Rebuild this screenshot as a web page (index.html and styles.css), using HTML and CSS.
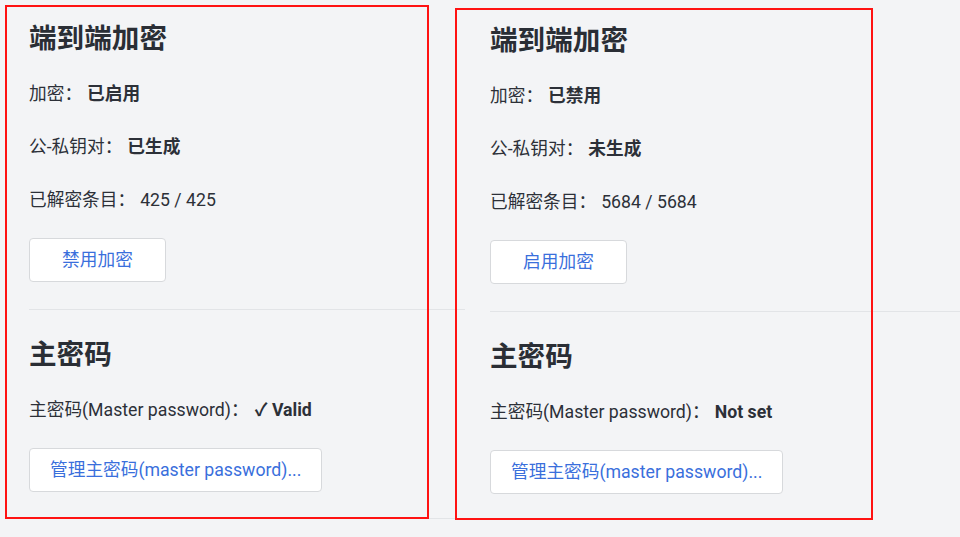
FILE: index.html
```html
<!DOCTYPE html>
<html lang="zh-CN">
<head>
<meta charset="utf-8">
<title>端到端加密</title>
<link rel="stylesheet" href="styles.css">
</head>
<body>
<div class="page">
  <div class="shot shot-left">
    <section class="sec sec-first">
      <h2 class="title">端到端加密</h2>
      <div class="rows">
        <p class="row">加密：<b class="val">已启用</b></p>
        <p class="row">公-私钥对：<b class="val">已生成</b></p>
        <p class="row">已解密条目：<span class="val">425 / 425</span></p>
      </div>
      <button class="btn btn-short">禁用加密</button>
    </section>
    <section class="sec sec-next">
      <h2 class="title">主密码</h2>
      <div class="rows">
        <p class="row">主密码(Master password)：<b class="val val-check">✓ Valid</b></p>
      </div>
      <button class="btn">管理主密码(master password)...</button>
    </section>
  </div>
  <div class="shot shot-right">
    <section class="sec sec-first">
      <h2 class="title">端到端加密</h2>
      <div class="rows">
        <p class="row">加密：<b class="val">已禁用</b></p>
        <p class="row">公-私钥对：<b class="val">未生成</b></p>
        <p class="row">已解密条目：<span class="val">5684 / 5684</span></p>
      </div>
      <button class="btn btn-short">启用加密</button>
    </section>
    <section class="sec sec-next sec-last">
      <h2 class="title">主密码</h2>
      <div class="rows">
        <p class="row">主密码(Master password)：<b class="val">Not set</b></p>
      </div>
      <button class="btn">管理主密码(master password)...</button>
    </section>
  </div>
  <div class="mark mark-left"></div>
  <div class="mark mark-right"></div>
</div>
</body>
</html>
```
FILE: styles.css
```css
* { box-sizing: border-box; }
html, body {
  margin: 0;
  padding: 0;
  background: #f3f4f6;
}
body {
  font-family: Roboto, "Noto Sans CJK SC", "Noto Sans", sans-serif;
  color: #2c3038;
  width: 960px;
  height: 537px;
  overflow: hidden;
}
.page {
  position: relative;
  display: flex;
  width: 960px;
  height: 537px;
}
.shot-left {
  width: 465px;
  padding-left: 29px;
}
.shot-right {
  flex: 1;
  padding-left: 25px;
  padding-top: 1.5px;
}
.sec {
  border-bottom: 1px solid #e2e4e7;
  padding-bottom: 27px;
}
.sec-first { padding-top: 21px; }
.sec-next { padding-top: 27px; padding-bottom: 26px; }
.sec-last { border-bottom: none; }
.title {
  margin: 0 0 25px;
  font-size: 27.6px;
  line-height: 36px;
  font-weight: 700;
  color: #2a2e35;
}
.rows {
  display: flex;
  flex-direction: column;
  gap: 29px;
}
.row {
  margin: 0;
  font-size: 17.7px;
  line-height: 24px;
}
.val {
  margin-left: 5px;
  font-weight: 400;
}
b.val { font-weight: 700; }
.val-check { margin-left: 6px; }
.btn {
  display: block;
  margin-top: 26px;
  height: 44px;
  min-width: 137px;
  padding: 0 20px;
  background: #ffffff;
  border: 1px solid #d7d9dc;
  border-radius: 4px;
  color: #3a6fdc;
  font-family: Roboto, "Noto Sans CJK SC", "Noto Sans", sans-serif;
  font-size: 17.7px;
  line-height: 24px;
  cursor: pointer;
}
.mark {
  position: absolute;
  border: 2px solid #ff1212;
  pointer-events: none;
}
.mark-left {
  left: 5px;
  top: 5px;
  width: 424px;
  height: 514px;
}
.mark-right {
  left: 455px;
  top: 8px;
  width: 418px;
  height: 512px;
}
```
